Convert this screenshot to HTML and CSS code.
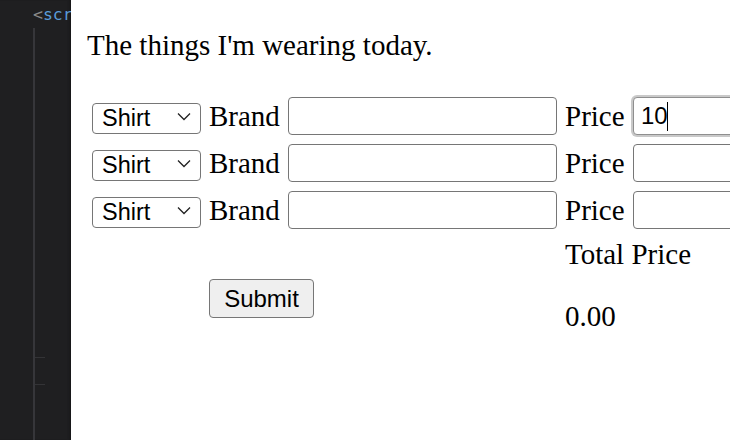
FILE: index.html
```html
<!DOCTYPE html>
<html>
<head>
<meta charset="utf-8">
<link rel="stylesheet" href="styles.css">
</head>
<body>
<div class="app">
  <aside class="editor">
    <div class="code"><span class="punc">&lt;</span><span class="tag">scr</span></div>
    <div class="guide">
      <span class="tick t1"></span>
      <span class="tick t2"></span>
    </div>
  </aside>
  <main class="page">
    <p class="title">The things I'm wearing today.</p>
    <form class="grid">
      <div class="sel"><select class="item"><option>Shirt</option></select><svg class="chev" width="14" height="9" viewBox="0 0 14 9"><path d="M1 1.5 L7 7.5 L13 1.5" fill="none" stroke="#222" stroke-width="1.3"/></svg></div>
      <span class="lbl">Brand</span>
      <input class="field" type="text">
      <span class="lbl">Price</span>
      <div class="focuswrap"><input class="field focused" type="text" value="10"><span class="caret"></span></div>

      <div class="sel"><select class="item"><option>Shirt</option></select><svg class="chev" width="14" height="9" viewBox="0 0 14 9"><path d="M1 1.5 L7 7.5 L13 1.5" fill="none" stroke="#222" stroke-width="1.3"/></svg></div>
      <span class="lbl">Brand</span>
      <input class="field" type="text">
      <span class="lbl">Price</span>
      <input class="field" type="text">

      <div class="sel"><select class="item"><option>Shirt</option></select><svg class="chev" width="14" height="9" viewBox="0 0 14 9"><path d="M1 1.5 L7 7.5 L13 1.5" fill="none" stroke="#222" stroke-width="1.3"/></svg></div>
      <span class="lbl">Brand</span>
      <input class="field" type="text">
      <span class="lbl">Price</span>
      <input class="field" type="text">

      <span class="lbl total">Total Price</span>

      <button class="submit" type="button">Submit</button>
      <span class="lbl sum">0.00</span>
    </form>
  </main>
</div>
</body>
</html>
```

FILE: styles.css
```css
html, body {
  margin: 0;
  padding: 0;
  width: 730px;
  height: 440px;
  overflow: hidden;
  background: #ffffff;
}

.app {
  display: flex;
  width: 730px;
  height: 440px;
}

.editor {
  width: 71px;
  flex: 0 0 71px;
  background: #1f1f21;
  position: relative;
  box-shadow: inset -3px 0 3px -2px #141416;
}

.code {
  font-family: "DejaVu Sans Mono", "Liberation Mono", monospace;
  font-size: 16.5px;
  line-height: 18px;
  padding: 6px 0 0 33px;
  white-space: nowrap;
  overflow: hidden;
}

.punc { color: #8a8a8a; }
.tag { color: #5a9bd8; }

.guide {
  position: absolute;
  left: 33px;
  top: 28px;
  bottom: 0;
  width: 2px;
  background: #36363a;
}

.tick {
  position: absolute;
  left: 2px;
  width: 10px;
  height: 1px;
  background: #333336;
}
.t1 { top: 329px; }
.t2 { top: 356px; }

.page {
  flex: 1;
  overflow: hidden;
  padding-left: 16px;
  font-family: "Liberation Serif", "Times New Roman", serif;
  font-size: 29px;
  color: #000;
}

.title {
  margin: 29px 0 0 0;
  line-height: 32px;
  white-space: nowrap;
}

.grid {
  margin: 36px 0 0 5px;
  display: grid;
  grid-template-columns: 109px 71px 269px 60px 269px;
  column-gap: 8px;
  row-gap: 9px;
  grid-template-rows: 38px 38px 38px 32px auto;
  align-items: center;
}

.lbl {
  line-height: 32px;
  white-space: nowrap;
}

.sel {
  position: relative;
  height: 31px;
  margin-top: -2px;
}

.item {
  appearance: none;
  -webkit-appearance: none;
  width: 109px;
  height: 31px;
  margin: 0;
  padding: 0 0 1px 9px;
  border: 1px solid #767676;
  border-radius: 4px;
  background: #fff;
  font-family: "Liberation Sans", Arial, sans-serif;
  font-size: 23.5px;
  color: #000;
  box-sizing: border-box;
}

.chev {
  position: absolute;
  left: 85px;
  top: 12px;
  pointer-events: none;
}

.field {
  width: 269px;
  height: 38px;
  margin: 0;
  box-sizing: border-box;
  border: 1px solid #767676;
  border-radius: 4px;
  padding: 0 7px;
  font-family: "Liberation Sans", Arial, sans-serif;
  font-size: 24px;
  color: #000;
  background: #fff;
}

.focuswrap {
  position: relative;
  height: 38px;
}

.focused {
  border: 1px solid #8f8f8f;
  box-shadow: 0 0 0 2px #c9c9c9;
}

.caret {
  position: absolute;
  left: 34px;
  top: 5px;
  width: 1px;
  height: 29px;
  background: #000;
}

.total {
  grid-column: 4 / 6;
}

.submit {
  grid-column: 2 / 4;
  justify-self: start;
  align-self: start;
  width: 105px;
  height: 39px;
  margin: 0;
  padding: 0;
  border: 1.5px solid #767676;
  border-radius: 4px;
  background: #efefef;
  font-family: "Liberation Sans", Arial, sans-serif;
  font-size: 24px;
  color: #000;
}

.sum {
  grid-column: 4 / 6;
  align-self: start;
  margin-top: 21px;
}
```
